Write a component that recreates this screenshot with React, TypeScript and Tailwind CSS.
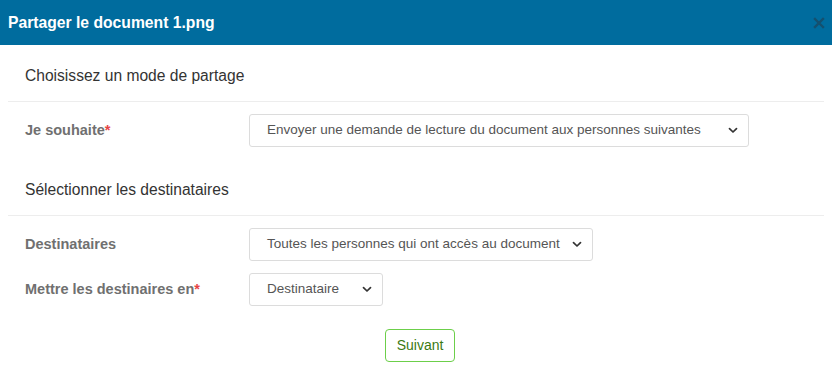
import React from "react";

function Chevron() {
  return (
    <svg width="10" height="7" viewBox="0 0 10 7" className="shrink-0">
      <path d="M1.5 1.7 L5 5 L8.5 1.7" fill="none" stroke="#333" strokeWidth="1.7" strokeLinecap="round" strokeLinejoin="round" />
    </svg>
  );
}

function Select({ text, width }: { text: string; width: string }) {
  return (
    <div className={`${width} h-[33px] border border-[#dcdcdc] rounded-[3px] bg-white flex items-center justify-between pl-[17px] pr-[10px] text-[13.5px] text-[#555]`}>
      <span className="whitespace-nowrap">{text}</span>
      <Chevron />
    </div>
  );
}

function Label({ text, required }: { text: string; required?: boolean }) {
  return (
    <div className="w-[224px] shrink-0 text-[14.5px] font-bold text-[#707070]">
      {text}
      {required && <span className="text-[#e64545]">*</span>}
    </div>
  );
}

export default function App() {
  return (
    <div className="w-[832px] h-[382px] bg-white overflow-hidden" style={{ fontFamily: '"Liberation Sans", Arial, sans-serif' }}>
      <div className="h-[45px] bg-[#006c9e] flex items-center justify-between pl-[8px] pr-[6px]">
        <div className="text-white font-bold text-[15.7px]">Partager le document 1.png</div>
        <svg width="12" height="12" viewBox="0 0 12 12" className="mt-[1px] mr-[1px]">
          <path d="M2 2 L10 10 M10 2 L2 10" stroke="#14506f" strokeWidth="2.4" strokeLinecap="square" />
        </svg>
      </div>
      <div className="px-[8px]">
        <div className="pt-[21px] pb-[15px] px-[17px] text-[15.6px] leading-[20px] text-[#333] border-b border-[#ededed]">
          Choisissez un mode de partage
        </div>
        <div className="px-[17px] mt-[12px] flex items-center">
          <Label text="Je souhaite" required />
          <Select text="Envoyer une demande de lecture du document aux personnes suivantes" width="w-[500px]" />
        </div>
        <div className="mt-[33px] pb-[15px] px-[17px] text-[15.6px] leading-[20px] text-[#333] border-b border-[#ededed]">
          Sélectionner les destinataires
        </div>
        <div className="px-[17px] mt-[12px] flex items-center">
          <Label text="Destinataires" />
          <Select text="Toutes les personnes qui ont accès au document" width="w-[344px]" />
        </div>
        <div className="px-[17px] mt-[12px] flex items-center">
          <Label text="Mettre les destinaires en" required />
          <Select text="Destinataire" width="w-[134px]" />
        </div>
        <div className="mt-[23px] flex justify-center">
          <button className="ml-[8px] w-[70px] h-[33px] border border-[#6ccf4a] rounded-[4px] text-[14px] text-[#3b7a12] bg-white">
            Suivant
          </button>
        </div>
      </div>
    </div>
  );
}
